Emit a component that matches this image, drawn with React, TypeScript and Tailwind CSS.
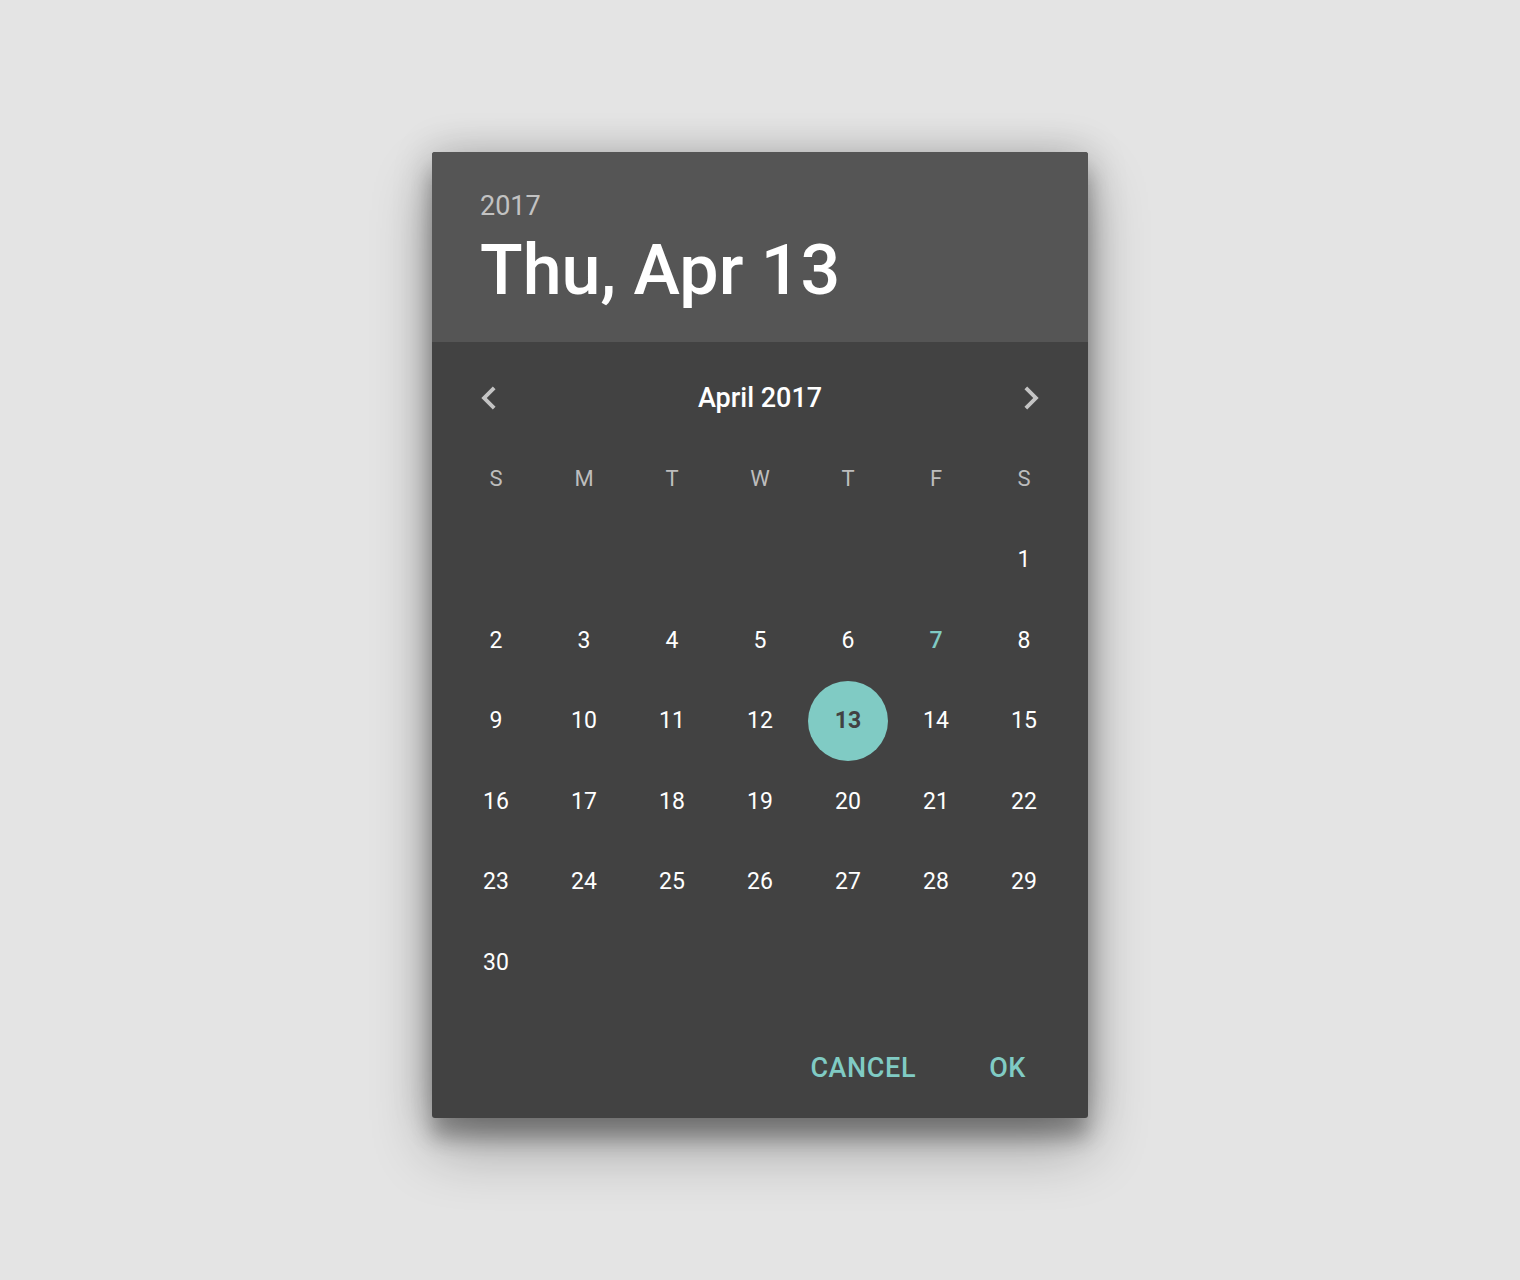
import React from "react";

const font = { fontFamily: "Roboto, 'Noto Sans', Arial, sans-serif" };

function ChevronLeft() {
  return (
    <svg width="46" height="46" viewBox="0 0 24 24" fill="#c4c4c4">
      <path d="M15.41 7.41L14 6l-6 6 6 6 1.41-1.41L10.83 12z" />
    </svg>
  );
}
function ChevronRight() {
  return (
    <svg width="46" height="46" viewBox="0 0 24 24" fill="#c4c4c4">
      <path d="M8.59 16.59L10 18l6-6-6-6-1.41 1.41L13.17 12z" />
    </svg>
  );
}

export default function App() {
  const weekdays = ["S", "M", "T", "W", "T", "F", "S"];
  const cells: (number | null)[] = [null, null, null, null, null, null];
  for (let d = 1; d <= 30; d++) cells.push(d);
  return (
    <div className="w-full h-[1280px] bg-[#e4e4e4] flex justify-center pt-[152px]" style={font}>
      <div className="w-[656px] h-[966px] rounded-[3px] overflow-hidden bg-[#424242] flex flex-col shadow-[0_30px_60px_rgba(0,0,0,0.3),0_20px_20px_rgba(0,0,0,0.25),0_0_40px_rgba(0,0,0,0.2)]">
        <div className="h-[190px] bg-[#555555] px-[48px] pt-[36px]">
          <div className="text-[27px] leading-[36px] text-[#c2c2c2]">2017</div>
          <div className="text-[70px] leading-[80px] font-medium text-white mt-[6px]">Thu, Apr 13</div>
        </div>
        <div className="pt-[16px] px-[34px] h-[96px] flex items-start">
          <div className="h-[80px] w-full flex items-center justify-between">
            <div className="w-[46px] h-[46px] flex items-center justify-center"><ChevronLeft /></div>
            <div className="text-[27px] font-medium text-white">April 2017</div>
            <div className="w-[46px] h-[46px] flex items-center justify-center"><ChevronRight /></div>
          </div>
        </div>
        <div className="px-[20px] grid grid-cols-7">
          {weekdays.map((w, i) => (
            <div key={i} className="h-[82px] pb-[2px] flex items-center justify-center text-[22px] text-[#bdbdbd]">{w}</div>
          ))}
          {cells.map((d, i) => (
            <div key={i} className="h-[80.5px] flex items-center justify-center">
              {d === 13 ? (
                <div className="w-[80px] h-[80px] rounded-full bg-[#80cbc4] flex items-center justify-center text-[23px] font-bold text-[#424242]">13</div>
              ) : d === 7 ? (
                <span className="text-[23px] font-medium text-[#80cbc4]">7</span>
              ) : d ? (
                <span className="text-[23px] text-white">{d}</span>
              ) : null}
            </div>
          ))}
        </div>
        <div className="flex-1 flex items-center justify-end pt-[16px] pr-[62px] gap-[73px]">
          <span className="text-[27px] font-medium tracking-[0.6px] text-[#80cbc4]">CANCEL</span>
          <span className="text-[27px] font-medium tracking-[0.6px] text-[#80cbc4]">OK</span>
        </div>
      </div>
    </div>
  );
}
